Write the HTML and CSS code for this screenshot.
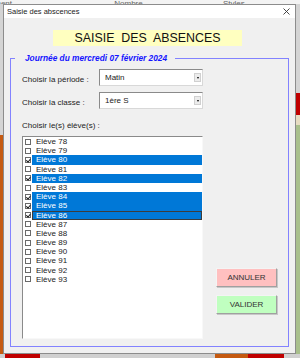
FILE: index.html
```html
<!DOCTYPE html>
<html lang="fr">
  <head>
    <meta charset="UTF-8" />
    <title>Saisie des abscences</title>
    <link rel="stylesheet" href="styles.css">
  </head>
  <body>
    <div class="ribbon">
      <span class="rb-one">Alignement</span>
      <span class="rb-two">Nombre</span>
      <span class="rb-three">Styles</span>
    </div>
    <div class="window">
      <div class="titlebar">
        <span class="title">Saisie des abscences</span>
        <svg class="close" width="7" height="7" viewBox="0 0 7 7">
          <path d="M0.5 0.5 L6.5 6.5 M6.5 0.5 L0.5 6.5" stroke="#333" stroke-width="0.9" fill="none" />
        </svg>
      </div>
      <div class="heading">SAISIE&nbsp; DES&nbsp; ABSENCES</div>
      <fieldset class="frame">
        <legend>Journée du mercredi 07 février 2024</legend>
        <div class="frame-body">
          <div class="field">
            <span class="label">Choisir la période :</span>
            <div class="combo"><span>Matin</span><span class="drop"></span></div>
          </div>
          <div class="field second">
            <span class="label">Choisir la classe :</span>
            <div class="combo"><span>1ère S</span><span class="drop"></span></div>
          </div>
          <div class="label list-label">Choisir le(s) élève(s) :</div>
          <div class="pick">
            <ul class="students">
              <li><span class="box"></span><span class="name">Elève 78</span></li>
              <li><span class="box"></span><span class="name">Elève 79</span></li>
              <li class="on"><span class="box"></span><span class="name">Elève 80</span></li>
              <li><span class="box"></span><span class="name">Elève 81</span></li>
              <li class="on"><span class="box"></span><span class="name">Elève 82</span></li>
              <li><span class="box"></span><span class="name">Elève 83</span></li>
              <li class="on"><span class="box"></span><span class="name">Elève 84</span></li>
              <li class="on"><span class="box"></span><span class="name">Elève 85</span></li>
              <li class="on focus"><span class="box"></span><span class="name">Elève 86</span></li>
              <li><span class="box"></span><span class="name">Elève 87</span></li>
              <li><span class="box"></span><span class="name">Elève 88</span></li>
              <li><span class="box"></span><span class="name">Elève 89</span></li>
              <li><span class="box"></span><span class="name">Elève 90</span></li>
              <li><span class="box"></span><span class="name">Elève 91</span></li>
              <li><span class="box"></span><span class="name">Elève 92</span></li>
              <li><span class="box"></span><span class="name">Elève 93</span></li>
            </ul>
            <div class="actions">
              <button class="btn cancel">ANNULER</button>
              <button class="btn ok">VALIDER</button>
            </div>
          </div>
        </div>
      </fieldset>
    </div>
    <div class="sheet-bottom"></div>
  </body>
</html>
```

FILE: styles.css
```css
body {
  margin: 0;
  width: 300px;
  height: 358px;
  overflow: hidden;
  font-family: "Liberation Sans", Arial, sans-serif;
  color: #222;
  background:
    linear-gradient(to bottom, #d4d4d4 0 135px, #c55a11 135px) no-repeat 0 0 / 3px 100%,
    linear-gradient(to bottom, #d4d4d4 0 93px, #c00000 93px 115px, #e6dcc2 115px 125px, #a8bf8c 125px) no-repeat 296px 0 / 4px 100%,
    #dcdcdc;
}

.ribbon {
  height: 4px;
  overflow: hidden;
  background-color: #f3f3f3;
  font-size: 8px;
  color: #666;
  white-space: nowrap;
  line-height: 8px;
}

.ribbon span {
  display: inline-block;
  margin-top: -5px;
}

.rb-one {
  margin-left: -28px;
}

.rb-two {
  margin-left: 100px;
}

.rb-three {
  margin-left: 78px;
}

.window {
  margin-left: 3px;
  width: 293px;
  height: 350px;
  box-sizing: border-box;
  border: 1px solid #8c8c8c;
  background-color: #f0f0f0;
}

.titlebar {
  height: 13px;
  background-color: #fff;
  display: flex;
  align-items: center;
  justify-content: space-between;
  padding: 0 5px 0 3px;
}

.title {
  font-size: 7.5px;
  color: #222;
}

.close {
  display: block;
}

.heading {
  margin: 12px 0 0 49px;
  width: 189px;
  height: 16px;
  line-height: 17px;
  background-color: #ffffc0;
  text-align: center;
  font-size: 12.4px;
  color: #111;
}

.frame {
  margin: 7px 6px 0;
  padding: 0;
  border: 1px solid #8282ff;
  min-width: 0;
}

.frame legend {
  margin-left: 4px;
  padding: 0 8px 0 10px;
  font-size: 8.3px;
  line-height: 10px;
  font-weight: bold;
  font-style: italic;
  color: #1414ff;
}

.frame-body {
  padding: 6px 10px 7px 11px;
}

.field {
  display: flex;
  align-items: center;
  height: 17px;
}

.field.second {
  margin-top: 6px;
}

.label {
  font-size: 8px;
  color: #222;
}

.field .label {
  width: 77px;
  padding-top: 3px;
}

.combo {
  width: 104px;
  height: 17px;
  box-sizing: border-box;
  border: 1px solid;
  border-color: #8a8a8a #d8d8d8 #d8d8d8 #8a8a8a;
  background-color: #fff;
  display: flex;
  align-items: center;
  justify-content: space-between;
  padding: 0 1px 0 5px;
  font-size: 8px;
}

.drop {
  width: 7px;
  height: 9px;
  box-sizing: border-box;
  border: 1px solid #d0d0d0;
  background-color: #ececec;
  display: flex;
  align-items: center;
  justify-content: center;
}

.drop::after {
  content: "";
  border-left: 1.5px solid transparent;
  border-right: 1.5px solid transparent;
  border-top: 2px solid #000;
}

.list-label {
  margin-top: 12px;
  line-height: 10px;
}

.pick {
  display: flex;
  margin-top: 5px;
}

.students {
  list-style: none;
  margin: 0;
  padding: 0;
  width: 181px;
  height: 203px;
  box-sizing: border-box;
  border: 1px solid;
  border-color: #8a8a8a #f8f8f8 #f8f8f8 #8a8a8a;
  background-color: #fff;
}

.students li {
  display: flex;
  align-items: center;
  height: 9.2px;
  font-size: 8px;
}

.box {
  width: 6px;
  height: 6px;
  box-sizing: border-box;
  margin: 0 1px 0 2px;
  border: 1px solid #6a6a6a;
  background-color: #fff;
  position: relative;
}

.on .box::after {
  content: "";
  position: absolute;
  left: 1px;
  top: 0px;
  width: 1.5px;
  height: 2.5px;
  border: solid #111;
  border-width: 0 1px 1px 0;
  transform: rotate(40deg);
}

.name {
  flex: 1;
  height: 100%;
  line-height: 9.2px;
  padding-left: 4px;
  color: #222;
}

.on .name {
  background-color: #0078d7;
  color: #fff;
}

.focus .name {
  box-shadow: inset 0 0 0 1px #3c3c3c;
}

.actions {
  display: flex;
  flex-direction: column;
  gap: 8px;
  margin: 132px 0 0 13px;
}

.btn {
  width: 61px;
  height: 19px;
  padding: 0;
  border: 1px solid;
  border-color: #f4f4f4 #a0a0a0 #a0a0a0 #f4f4f4;
  box-shadow: 1px 1px 0 #c8c8c8;
  font-family: "Liberation Sans", Arial, sans-serif;
  font-size: 8px;
  color: #333;
}

.cancel {
  background-color: #ffc0c0;
}

.ok {
  background-color: #c0ffc0;
}

.sheet-bottom {
  height: 4px;
  background:
    linear-gradient(to right, #d0d0d0 0 5px, #c00000 5px 40px, #d0d0d0 40px 215px, #c55a11 215px 248px, #c00000 248px 284px, #d0d0d0 284px);
}
```
